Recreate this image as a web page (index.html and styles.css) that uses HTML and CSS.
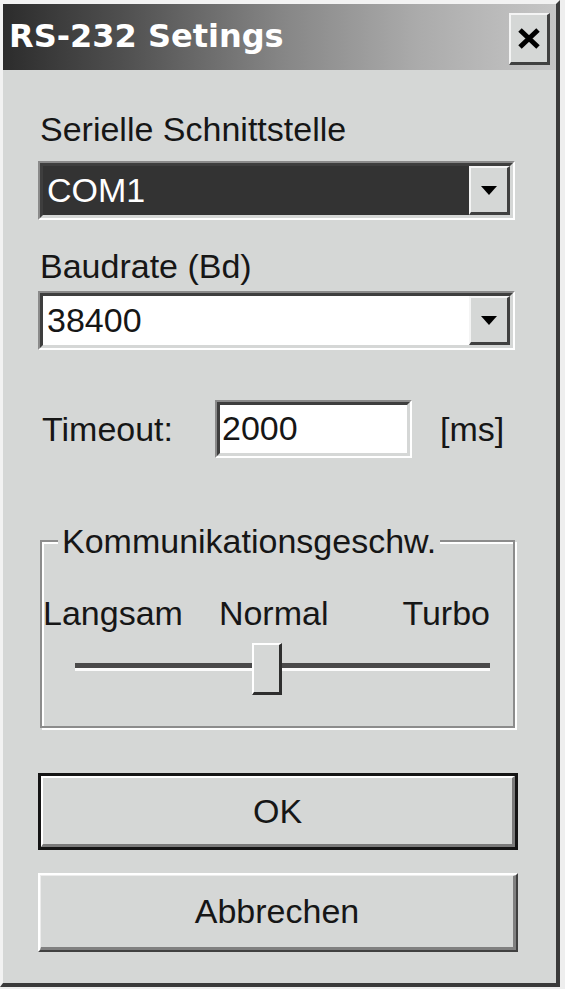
FILE: index.html
```html
<!DOCTYPE html>
<html lang="de">
<head>
<meta charset="utf-8">
<title>RS-232 Setings</title>
<link rel="stylesheet" href="styles.css">
</head>
<body>
<div class="window">
  <div class="titlebar">
    <span class="title">RS-232 Setings</span>
    <div class="close-btn">
      <svg width="24" height="21" viewBox="0 0 24 21"><path d="M3 2 L21 19 M21 2 L3 19" stroke="#000" stroke-width="5"/></svg>
    </div>
  </div>
  <div class="content">
    <div class="label">Serielle Schnittstelle</div>
    <div class="combo combo-first">
      <div class="combo-inner">
        <div class="combo-value selected">COM1</div>
        <div class="combo-btn"><span class="arrow"></span></div>
      </div>
    </div>
    <div class="label label-baud">Baudrate (Bd)</div>
    <div class="combo combo-second">
      <div class="combo-inner">
        <div class="combo-value">38400</div>
        <div class="combo-btn"><span class="arrow"></span></div>
      </div>
    </div>
    <div class="timeout-row">
      <span class="timeout-label">Timeout:</span>
      <div class="field"><div class="field-inner">2000</div></div>
      <span class="unit">[ms]</span>
    </div>
    <div class="group">
      <span class="group-legend">Kommunikationsgeschw.</span>
      <div class="speed-labels">
        <span>Langsam</span>
        <span class="lbl-normal">Normal</span>
        <span class="lbl-turbo">Turbo</span>
      </div>
      <div class="slider">
        <div class="track"></div>
        <div class="thumb"></div>
      </div>
    </div>
    <div class="btn btn-default"><div class="btn-face">OK</div></div>
    <div class="btn btn-normal"><div class="btn-face">Abbrechen</div></div>
  </div>
</div>
</body>
</html>
```
FILE: styles.css
```css
html, body {
  margin: 0;
  padding: 0;
  background: #eeeeee;
}

body {
  font-family: "Liberation Sans", Arial, sans-serif;
  font-size: 34px;
  color: #161616;
}

.window {
  box-sizing: border-box;
  width: 560px;
  height: 987px;
  background: #d5d7d6;
  border-style: solid;
  border-width: 4px 4px 4px 3px;
  border-color: #f2f2f2 #3a3a3a #3a3a3a #f2f2f2;
  display: flex;
  flex-direction: column;
}

.titlebar {
  height: 66px;
  display: flex;
  align-items: center;
  justify-content: space-between;
  padding: 0 6px 0 6px;
  background: linear-gradient(to right, #2c2c2c 0%, #505050 22%, #858585 50%, #ababab 75%, #c6c6c6 100%);
  flex-shrink: 0;
}

.title {
  font-family: "DejaVu Sans", Verdana, sans-serif;
  font-weight: bold;
  font-size: 32px;
  color: #ffffff;
  line-height: 40px;
  margin-top: -2px;
}

.close-btn {
  box-sizing: border-box;
  width: 41px;
  height: 52px;
  margin-top: 4px;
  background: #d5d7d6;
  border-style: solid;
  border-width: 2px 3px 3px 2px;
  border-color: #f4f4f4 #404040 #404040 #f4f4f4;
  display: flex;
  align-items: center;
  justify-content: center;
}

.close-btn svg {
  display: block;
}

.content {
  padding: 39px 41px 0 35px;
  display: flex;
  flex-direction: column;
}

.label {
  line-height: 40px;
  padding-left: 2px;
}

.label-baud {
  margin-top: 26px;
}

.combo {
  box-sizing: border-box;
  height: 59px;
  border: 2px solid;
  border-color: #8a8a8a #ffffff #ffffff #8a8a8a;
}

.combo-first {
  margin-top: 12px;
}

.combo-second {
  margin-top: 5px;
}

.combo-inner {
  box-sizing: border-box;
  height: 100%;
  display: flex;
  border: 3px solid;
  border-color: #3e3e3e #d5d7d6 #d5d7d6 #3e3e3e;
  background: #ffffff;
}

.combo-value {
  flex: 1;
  padding-left: 4px;
  line-height: 49px;
  background: #ffffff;
}

.combo-value.selected {
  background: #333333;
  color: #ffffff;
}

.combo-btn {
  box-sizing: border-box;
  width: 41px;
  background: #d5d7d6;
  border-style: solid;
  border-width: 2px 3px 3px 2px;
  border-color: #f4f4f4 #404040 #404040 #f4f4f4;
  display: flex;
  align-items: center;
  justify-content: center;
}

.arrow {
  width: 0;
  height: 0;
  border-left: 8px solid transparent;
  border-right: 8px solid transparent;
  border-top: 9px solid #000000;
}

.timeout-row {
  margin-top: 50px;
  height: 58px;
  display: flex;
  align-items: center;
}

.timeout-label {
  width: 177px;
  padding-left: 4px;
  box-sizing: border-box;
  line-height: 40px;
}

.field {
  box-sizing: border-box;
  width: 197px;
  height: 58px;
  border: 2px solid;
  border-color: #8a8a8a #ffffff #ffffff #8a8a8a;
}

.field-inner {
  box-sizing: border-box;
  height: 100%;
  border: 3px solid;
  border-color: #3e3e3e #d5d7d6 #d5d7d6 #3e3e3e;
  background: #ffffff;
  padding-left: 2px;
  line-height: 46px;
}

.unit {
  margin-left: 28px;
  line-height: 40px;
}

.group {
  position: relative;
  box-sizing: border-box;
  margin-top: 82px;
  margin-left: 2px;
  height: 188px;
  border: 2px solid #8c8c8c;
  box-shadow: inset 2px 2px 0 #ffffff, 2px 2px 0 #ffffff;
  padding: 51px 23px 0 1px;
}

.group-legend {
  position: absolute;
  top: -21px;
  left: 16px;
  padding: 0 4px;
  line-height: 40px;
  background: #d5d7d6;
}

.speed-labels {
  display: flex;
  line-height: 40px;
}

.lbl-normal {
  margin-left: 36px;
}

.lbl-turbo {
  margin-left: auto;
}

.slider {
  position: relative;
  margin: 10px 0 0 32px;
  height: 52px;
}

.track {
  position: absolute;
  left: 0;
  right: 0;
  top: 20px;
  height: 0;
  border-top: 5px solid #4a4a4a;
  border-bottom: 3px solid #fbfbfb;
}

.thumb {
  position: absolute;
  left: 177px;
  top: 0;
  box-sizing: border-box;
  width: 30px;
  height: 52px;
  background: #d5d7d6;
  border-style: solid;
  border-width: 2px 3px 3px 2px;
  border-color: #ffffff #2e2e2e #2e2e2e #ffffff;
}

.btn {
  box-sizing: border-box;
  margin-right: -3px;
  border-style: solid;
  text-align: center;
}

.btn-face {
  box-sizing: border-box;
  height: 100%;
  display: flex;
  align-items: center;
  justify-content: center;
  border-style: solid;
}

.btn-default {
  margin-top: 45px;
  height: 77px;
  border-width: 3px;
  border-color: #141414;
}

.btn-default .btn-face {
  border-width: 2px 3px 3px 2px;
  border-color: #ffffff #7a7a7a #7a7a7a #ffffff;
}

.btn-normal {
  margin-top: 23px;
  height: 79px;
  border-width: 2px 2px 2px 2px;
  border-color: #ffffff #404040 #404040 #ffffff;
}

.btn-normal .btn-face {
  border-width: 1px 3px 3px 1px;
  border-color: #ececec #808080 #808080 #ececec;
}
```
